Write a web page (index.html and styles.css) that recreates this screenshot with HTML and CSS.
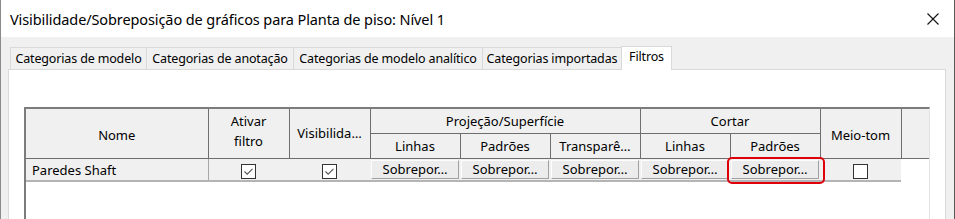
FILE: index.html
```html
<!DOCTYPE html>
<html lang="pt">
<head>
   <meta charset="UTF-8">
   <title>Visibilidade/Sobreposição de gráficos</title>
   <link rel="stylesheet" href="styles.css">
</head>
<body>
<div class="window">
   <div class="titlebar">
      <span class="title">Visibilidade/Sobreposição de gráficos para Planta de piso: Nível 1</span>
      <svg class="close" width="12" height="12" viewBox="0 0 12 12">
         <path d="M0.5 0.5 L11.5 11.5 M11.5 0.5 L0.5 11.5" stroke="#111" stroke-width="1.1" fill="none"/>
      </svg>
   </div>

   <div class="dialog">
      <div class="tabs">
         <div class="tab tab-1">Categorias de modelo</div>
         <div class="tab tab-2">Categorias de anotação</div>
         <div class="tab tab-3">Categorias de modelo analítico</div>
         <div class="tab tab-4">Categorias importadas</div>
         <div class="tab tab-active">Filtros</div>
      </div>

      <div class="panel">
         <div class="grid-wrap">
            <table class="grid">
               <colgroup>
                  <col class="c-name">
                  <col class="c-check">
                  <col class="c-check">
                  <col class="c-btn">
                  <col class="c-btn">
                  <col class="c-btn">
                  <col class="c-btn">
                  <col class="c-btn">
                  <col class="c-check">
                  <col class="c-spare">
               </colgroup>
               <thead>
                  <tr class="head-1">
                     <th rowspan="2" class="mid">Nome</th>
                     <th rowspan="2" class="two-line">Ativar<br>filtro</th>
                     <th rowspan="2">Visibilida…</th>
                     <th colspan="3">Projeção/Superfície</th>
                     <th colspan="2">Cortar</th>
                     <th rowspan="2" class="mid">Meio-tom</th>
                     <th rowspan="2" class="spare"></th>
                  </tr>
                  <tr class="head-2">
                     <th>Linhas</th>
                     <th>Padrões</th>
                     <th>Transparê…</th>
                     <th>Linhas</th>
                     <th>Padrões</th>
                  </tr>
               </thead>
               <tbody>
                  <tr class="row">
                     <td class="name">Paredes Shaft</td>
                     <td class="center"><span class="checkbox"><svg width="13" height="13" viewBox="0 0 13 13"><path d="M2.5 6.5 L5.2 9.2 L10.5 3.8" stroke="#555" stroke-width="1.1" fill="none"/></svg></span></td>
                     <td class="center"><span class="checkbox"><svg width="13" height="13" viewBox="0 0 13 13"><path d="M2.5 6.5 L5.2 9.2 L10.5 3.8" stroke="#555" stroke-width="1.1" fill="none"/></svg></span></td>
                     <td><button class="override">Sobrepor…</button></td>
                     <td><button class="override">Sobrepor…</button></td>
                     <td><button class="override">Sobrepor…</button></td>
                     <td><button class="override">Sobrepor…</button></td>
                     <td class="marked"><button class="override">Sobrepor…</button><span class="highlight"></span></td>
                     <td class="center"><span class="checkbox"></span></td>
                     <td class="spare"></td>
                  </tr>
               </tbody>
            </table>
         </div>
      </div>
   </div>
</div>
</body>
</html>
```

FILE: styles.css
```css
body{
   margin: 0;
   background-color: white;
   font-family: "Noto Sans", "Open Sans", sans-serif;
   color: black;
   overflow: hidden;
}

.window{
   width: 953px;
   height: 219px;
   border-left: 1px solid #8a8a8a;
   border-right: 1px solid #5a5a5a;
   display: flex;
   flex-direction: column;
   overflow: hidden;
}

.titlebar{
   height: 37px;
   background-color: white;
   display: flex;
   align-items: center;
   justify-content: space-between;
   padding: 0 15px 0 9px;
   flex-shrink: 0;
}

.title{
   font-size: 14.5px;
   letter-spacing: -0.1px;
}

.dialog{
   flex: 1;
   background-color: #f0f0f0;
   padding: 9px 8px 0 7px;
}

/* tabs */
.tabs{
   display: flex;
   align-items: flex-end;
   padding-left: 2px;
   height: 23px;
   position: relative;
   z-index: 1;
}

.tab{
   box-sizing: border-box;
   height: 22px;
   border: 1px solid #d9d9d9;
   border-bottom: none;
   border-right: none;
   background-color: #f0f0f0;
   font-size: 12.5px;
   line-height: 21px;
   text-align: center;
   white-space: nowrap;
   letter-spacing: -0.15px;
}

.tab-1{ width: 136px; }
.tab-2{ width: 147px; }
.tab-3{ width: 189px; }
.tab-4{ width: 139px; }

.tab-active{
   width: 51px;
   height: 24px;
   margin-bottom: -1px;
   background-color: white;
   border-right: 1px solid #d9d9d9;
   line-height: 20px;
}

.panel{
   background-color: white;
   border: 1px solid #d9d9d9;
   height: 160px;
   padding: 37px 15px 0 15px;
}

/* filter grid */
.grid-wrap{
   width: 903px;
   height: 130px;
   border-top: 2px solid #7c7c7c;
   border-left: 2px solid #7c7c7c;
   border-right: 1px solid #e3e3e3;
}

.grid{
   table-layout: fixed;
   border-collapse: collapse;
   width: 903px;
   font-size: 13px;
}

.c-name{ width: 182px; }
.c-check{ width: 81px; }
.c-btn{ width: 90px; }
.c-spare{ width: 28px; }

.grid th{
   background-color: #f0f0f0;
   font-weight: normal;
   border-right: 1px solid #6e6e6e;
   border-bottom: 1px solid #6e6e6e;
   padding: 0;
   line-height: 17px;
   white-space: nowrap;
   overflow: hidden;
}

.grid th.two-line{
   line-height: 20px;
   padding-bottom: 5px;
}

.grid th.mid{
   padding-top: 3px;
}

.head-1 th{
   height: 24px;
}

.head-2 th{
   height: 24px;
}

.grid th.spare{
   border-right: none;
}

.grid td{
   background-color: #f0f0f0;
   border-bottom: 2px solid #b4b4b4;
   height: 20px;
   padding: 0 1px;
   white-space: nowrap;
}

.grid td.spare{
   background-color: white;
   border-bottom: none;
}

.grid td.name{
   padding-left: 6px;
   padding-top: 1px;
   border-right: 1px solid #a8a8a8;
}

.center{
   text-align: center;
}

.checkbox{
   display: inline-block;
   box-sizing: border-box;
   width: 15px;
   height: 15px;
   border: 1px solid #333;
   background-color: white;
   vertical-align: middle;
   line-height: 0;
}

.override{
   display: block;
   width: 100%;
   height: 19px;
   padding: 0;
   margin: 0;
   font-family: inherit;
   font-size: 13px;
   line-height: 17px;
   color: black;
   background-color: #ececec;
   border: 1px solid;
   border-color: #fdfdfd #a0a0a0 #a0a0a0 #fdfdfd;
}

.marked{
   position: relative;
}

.highlight{
   position: absolute;
   left: -3px;
   right: -5px;
   top: -2px;
   bottom: -4px;
   border: 2.5px solid #e0000a;
   border-radius: 5px;
}
```
